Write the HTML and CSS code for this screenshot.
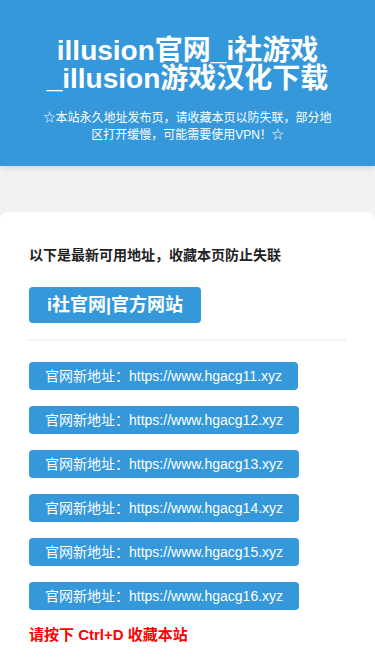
FILE: index.html
```html
<!DOCTYPE html>
<html lang="zh-CN">
<head>
  <meta charset="UTF-8" />
  <meta name="viewport" content="width=device-width, initial-scale=1" />
  <title>illusion官网_i社游戏_illusion游戏汉化下载</title>
  <link rel="stylesheet" href="styles.css">
</head>
<body>
  <header class="top">
    <h1>illusion官网_i社游戏_illusion游戏汉化下载</h1>
    <p class="tip">☆本站永久地址发布页，请收藏本页以防失联，部分地区打开缓慢，可能需要使用VPN！☆</p>
  </header>

  <section class="card">
    <p class="intro">以下是最新可用地址，收藏本页防止失联</p>
    <a class="main-btn" href="#">i社官网|官方网站</a>
    <div class="line"></div>

    <div class="links">
      <a class="link-btn" href="#">官网新地址：https://www.hgacg11.xyz</a>
      <a class="link-btn" href="#">官网新地址：https://www.hgacg12.xyz</a>
      <a class="link-btn" href="#">官网新地址：https://www.hgacg13.xyz</a>
      <a class="link-btn" href="#">官网新地址：https://www.hgacg14.xyz</a>
      <a class="link-btn" href="#">官网新地址：https://www.hgacg15.xyz</a>
      <a class="link-btn" href="#">官网新地址：https://www.hgacg16.xyz</a>
    </div>

    <p class="fav">请按下 Ctrl+D 收藏本站</p>
  </section>
</body>
</html>
```

FILE: styles.css
```css
body {
  margin: 0;
  background: #f2f2f2;
  font-family: "Liberation Sans", Arial, "Noto Sans CJK SC", sans-serif;
  color: #222;
}
.top {
  background: #3498db;
  color: #fff;
  text-align: center;
  padding: 37px 38px 22px;
  box-shadow: 0 2px 6px rgba(0,0,0,0.12);
}
.top h1 {
  margin: 0;
  font-size: 28px;
  line-height: 28px;
  font-weight: bold;
}
.tip {
  margin: 17px 0 0;
  font-size: 12px;
  line-height: 17px;
}
.card {
  background: #fff;
  margin-top: 46px;
  border-radius: 8px;
  padding: 33px 29px 40px;
}
.intro {
  margin: 0;
  font-size: 14px;
  line-height: 20px;
  font-weight: bold;
  color: #222;
}
.main-btn {
  display: inline-block;
  margin-top: 22px;
  background: #3498db;
  color: #fff;
  text-decoration: none;
  font-size: 18px;
  font-weight: bold;
  line-height: 20px;
  padding: 8px 18px;
  border-radius: 4px;
}
.line {
  height: 2px;
  background: #f2f2f2;
  margin-top: 16px;
}
.links {
  display: flex;
  flex-direction: column;
  align-items: flex-start;
  gap: 16px;
  margin-top: 21px;
}
.link-btn {
  display: inline-block;
  background: #3498db;
  color: #fff;
  text-decoration: none;
  font-size: 14px;
  line-height: 28px;
  padding: 0 16px;
  border-radius: 4px;
}
.fav {
  margin: 15px 0 0;
  color: #ff0000;
  font-size: 15px;
  line-height: 20px;
  font-weight: bold;
}
```
